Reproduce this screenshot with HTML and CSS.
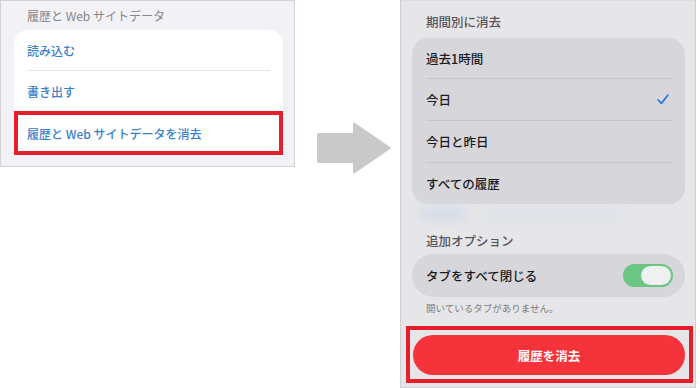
FILE: index.html
```html
<!DOCTYPE html>
<html lang="ja">
<head>
<meta charset="utf-8">
<link rel="stylesheet" href="styles.css">
</head>
<body>
<div class="page">
  <section class="left">
    <div class="l-title">履歴と Web サイトデータ</div>
    <div class="l-card">
      <div class="l-row">読み込む</div>
      <div class="l-row">書き出す</div>
      <div class="l-hl"><div class="l-row last">履歴と Web サイトデータを消去</div></div>
    </div>
  </section>

  <div class="arrow">
    <svg width="76" height="52" viewBox="0 0 76 52">
      <path d="M2 11 H36 V2 Q36 0 38 1 L73 25 Q75 26 73 27 L38 51 Q36 52 36 50 V41 H2 Q0 41 0 39 V13 Q0 11 2 11 Z" fill="#c9c9c9"/>
    </svg>
  </div>

  <section class="right">
    <div class="r-title">期間別に消去</div>
    <div class="r-card">
      <div class="r-row">過去1時間</div>
      <div class="r-row">今日
        <svg class="check" width="12" height="11" viewBox="0 0 12 11"><path d="M1.2 6 L4.4 9.4 L10.8 1.3" fill="none" stroke="#2f78d4" stroke-width="1.8" stroke-linecap="round" stroke-linejoin="round"/></svg>
      </div>
      <div class="r-row">今日と昨日</div>
      <div class="r-row">すべての履歴</div>
    </div>
    <div class="smudge"><span class="blob b1"></span><span class="blob b2"></span></div>
    <div class="r-title2">追加オプション</div>
    <div class="r-toggle-card">
      <span>タブをすべて閉じる</span>
      <span class="toggle"><span class="thumb"></span></span>
    </div>
    <div class="note">開いているタブがありません。</div>
    <div class="r-hl">
      <div class="btn">履歴を消去</div>
    </div>
  </section>
</div>
</body>
</html>
```

FILE: styles.css
```css
* { box-sizing: border-box; }
html, body { margin: 0; padding: 0; }
body {
  width: 700px;
  height: 388px;
  background: #ffffff;
  font-family: "Noto Sans CJK JP", "Noto Sans", sans-serif;
  overflow: hidden;
}
.page {
  display: flex;
  align-items: flex-start;
}

/* left panel */
.left {
  width: 295px;
  height: 167px;
  border: 1px solid #d2d2d6;
  background: #f2f2f6;
  display: flex;
  flex-direction: column;
}
.l-title {
  height: 29px;
  padding: 6px 0 0 26px;
  font-size: 12px;
  line-height: 18px;
  color: #86868b;
}
.l-card {
  margin: 0 11px 0 13px;
  background: #ffffff;
  border-radius: 14px 14px 0 0;
  display: flex;
  flex-direction: column;
}
.l-row {
  margin: 0 13px;
  height: 40px;
  display: flex;
  align-items: center;
  font-size: 12px;
  font-weight: 500;
  color: #3a80c9;
}
.l-row + .l-row { border-top: 1px solid #e6e6ea; height: 41px; }
.l-hl {
  border: 4px solid #e41f2b;
  height: 44px;
}
.l-row.last {
  margin: 0 9px;
  height: 36px;
}

/* arrow */
.arrow {
  width: 105px;
  padding: 122px 0 0 22px;
}
.arrow svg { display: block; }

/* right panel */
.right {
  width: 296px;
  height: 388px;
  border: 1px solid #cfcfd3;
  border-top-color: #dcdce0;
  background: #e6e6e8;
  padding: 0 10px 0 11px;
  display: flex;
  flex-direction: column;
}
.r-title {
  height: 37px;
  padding: 12px 0 0 14px;
  font-size: 12.5px;
  line-height: 18px;
  color: #55555a;
  font-weight: 500;
}
.r-card {
  background: #d7d7db;
  border-radius: 16px;
  display: flex;
  flex-direction: column;
}
.r-row {
  margin: 0 12px 0 14px;
  height: 41px;
  display: flex;
  align-items: center;
  justify-content: space-between;
  font-size: 12.5px;
  font-weight: 500;
  color: #1a1a1c;
}
.r-row:first-child { height: 40px; }
.r-row + .r-row { border-top: 1px solid #c6c6ca; height: 42px; }
.check { margin-right: 4px; }

.smudge {
  height: 22px;
  display: flex;
  gap: 14px;
  padding: 3px 0 0 6px;
}
.blob {
  height: 14px;
  border-radius: 7px;
  filter: blur(5px);
}
.b1 { width: 50px; background: #d6dde9; }
.b2 { width: 140px; background: #dfe3ea; }

.r-title2 {
  height: 28px;
  padding: 6px 0 0 14px;
  font-size: 12.5px;
  line-height: 18px;
  color: #55555a;
  font-weight: 500;
}
.r-toggle-card {
  height: 43px;
  background: #d7d7db;
  border-radius: 22px;
  display: flex;
  align-items: center;
  justify-content: space-between;
  padding: 0 12px 0 14px;
  font-size: 12.5px;
  font-weight: 500;
  color: #1a1a1c;
}
.toggle {
  width: 50px;
  height: 23px;
  border-radius: 12px;
  background: #6cc583;
  display: flex;
  align-items: center;
  justify-content: flex-end;
  padding-right: 2px;
}
.thumb {
  width: 30px;
  height: 19px;
  border-radius: 10px;
  background: #eef1ef;
}
.note {
  margin-top: 3px;
  padding-left: 14px;
  font-size: 9.5px;
  line-height: 16px;
  color: #7a7a7e;
}
.r-hl {
  margin: 10px -8px 0 -6px;
  border: 4px solid #e41f2b;
  height: 57px;
  padding: 5px 4px 0 3px;
}
.btn {
  height: 40px;
  border-radius: 20px;
  background: #f5333b;
  color: #ffffff;
  font-size: 12.5px;
  font-weight: 700;
  display: flex;
  align-items: center;
  justify-content: center;
}
```
